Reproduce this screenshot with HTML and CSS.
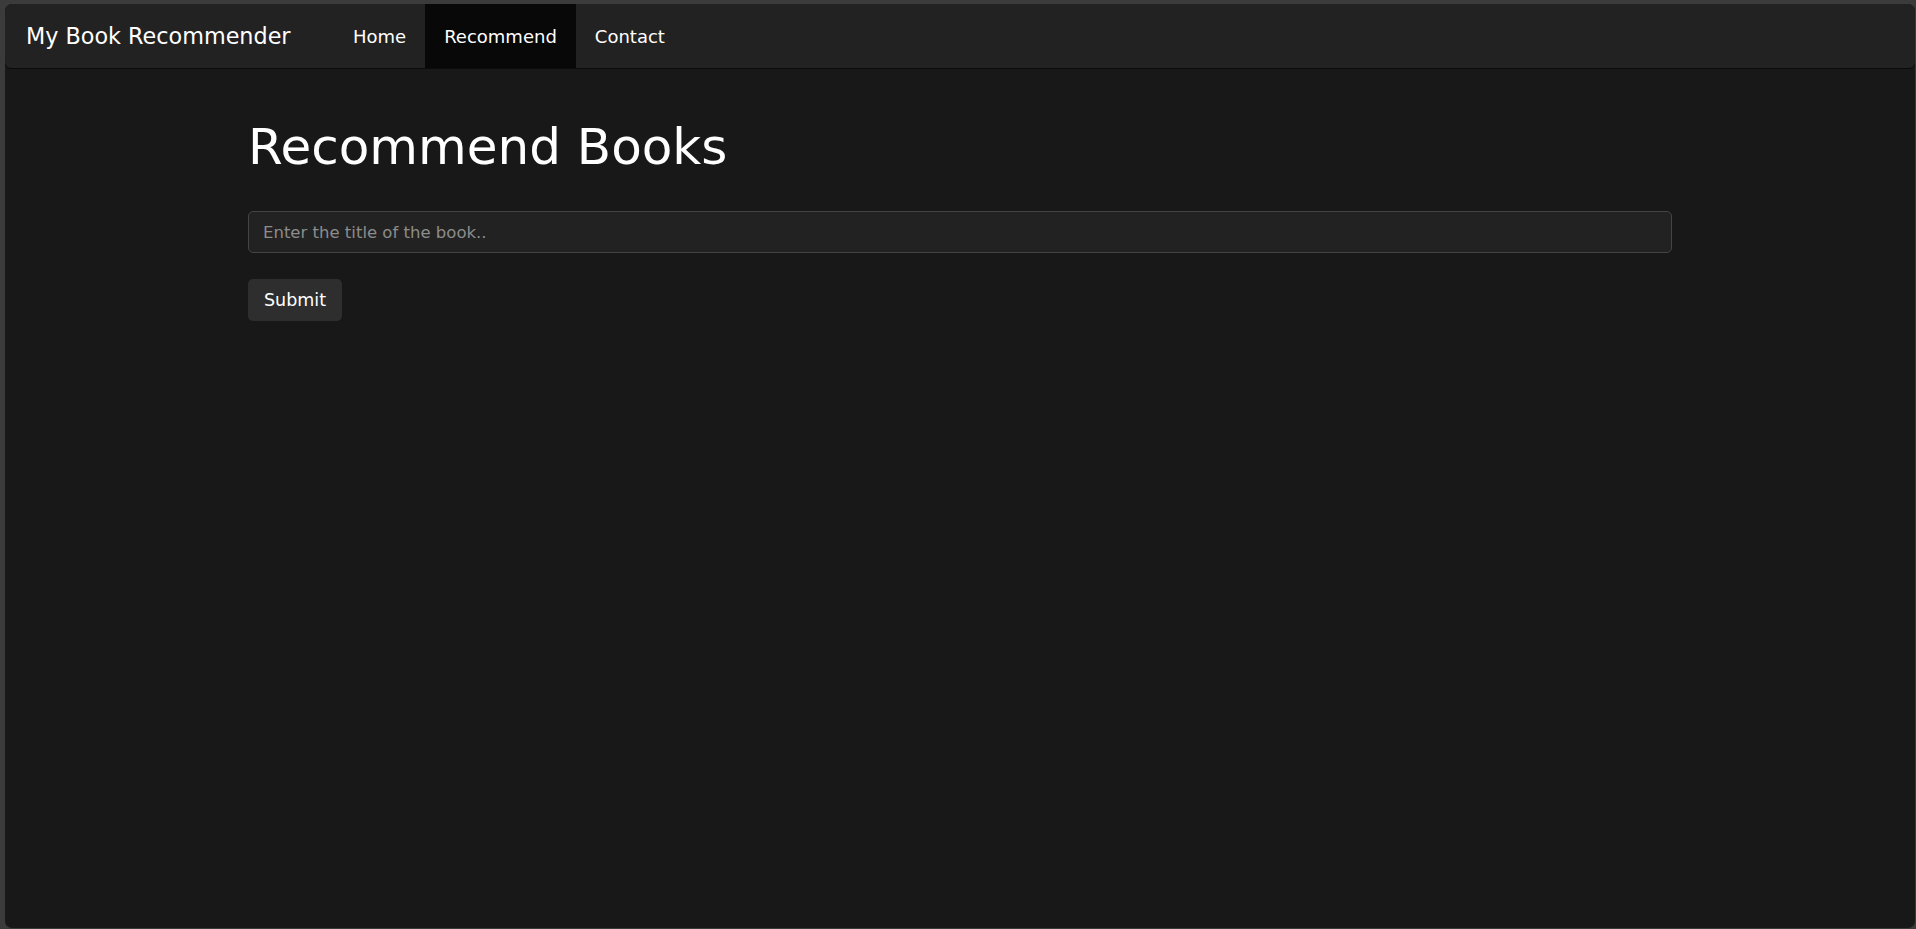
FILE: index.html
```html
<!DOCTYPE html>
<html lang="en">
<head>
<meta charset="utf-8">
<title>My Book Recommender</title>
<link rel="stylesheet" href="styles.css">
</head>
<body>
<div class="app">
  <nav class="navbar">
    <a class="brand" href="#">My Book Recommender</a>
    <ul class="nav">
      <li><a class="nav-link" href="#">Home</a></li>
      <li><a class="nav-link active" href="#">Recommend</a></li>
      <li><a class="nav-link" href="#">Contact</a></li>
    </ul>
  </nav>
  <main class="content">
    <h1 class="title">Recommend Books</h1>
    <form class="form">
      <input class="field" type="text" placeholder="Enter the title of the book..">
      <button class="btn" type="button">Submit</button>
    </form>
  </main>
</div>
</body>
</html>
```
FILE: styles.css
```css
* { box-sizing: border-box; }
html, body { height: 100%; }
body {
  margin: 0;
  background: #3b3b3b;
  font-family: "DejaVu Sans", sans-serif;
  color: #fff;
}
.app {
  height: calc(100% - 5px);
  margin: 4px 1px 0 5px;
  background: #181818;
  border-radius: 7px;
  overflow: hidden;
  display: flex;
  flex-direction: column;
}
.navbar {
  flex: 0 0 64px;
  background: #222;
  display: flex;
  align-items: stretch;
  border-radius: 6px;
  box-shadow: 0 1px 0 #0b0b0b;
  overflow: hidden;
}
.brand {
  display: flex;
  align-items: center;
  padding-left: 21px;
  width: 329px;
  color: #fff;
  text-decoration: none;
  font-size: 22.3px;
}
.nav { list-style: none; margin: 0; padding: 0; display: flex; }
.nav li { display: flex; }
.nav-link {
  display: flex;
  align-items: center;
  padding: 0 19px;
  color: #fff;
  text-decoration: none;
  font-size: 18px;
}
.nav-link.active { background: #080808; }
.content {
  width: 1424px;
  margin: 0 auto;
}
.title {
  font-weight: 400;
  font-size: 50px;
  line-height: 60px;
  margin: 49px 0 34px;
}
.form { display: flex; flex-direction: column; align-items: flex-start; gap: 26px; }
.field {
  width: 100%;
  height: 42px;
  background: #222;
  border: 1px solid #444;
  border-radius: 5px;
  padding: 0 14px;
  color: #fff;
  font: inherit;
  font-size: 16.5px;
}
.field::placeholder { color: #8c8c8c; }
.btn {
  height: 42px;
  padding: 0 16px;
  background: #2e2e2e;
  border: 0;
  border-radius: 5px;
  color: #fff;
  font: inherit;
  font-size: 17.5px;
}
```
